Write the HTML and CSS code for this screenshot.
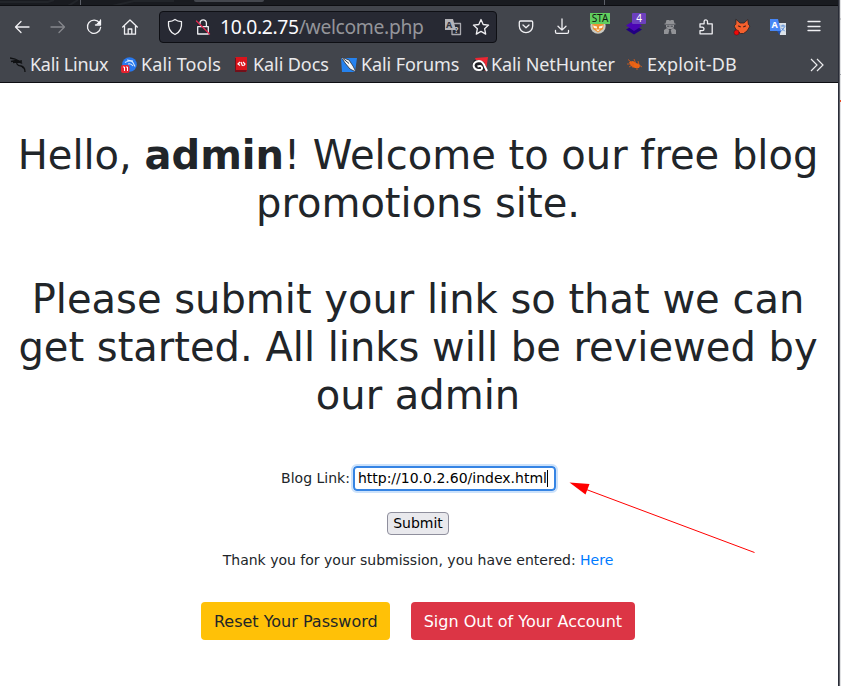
FILE: index.html
```
<!DOCTYPE html>
<html lang="en">
<head>
<meta charset="utf-8">
<title>Welcome</title>
<link rel="stylesheet" href="styles.css">
</head>
<body>
<div class="window">
  <header class="chrome">
    <div class="tabs">
      <svg width="838" height="6" viewBox="0 0 838 6"><path d="M0 2H48L54 0M78 0l-10 6M112 6l22-5h40" stroke="#22252a" stroke-width="2" fill="none"/><path d="M80.500 0v5M604.500 0v5" stroke="#5d6068"/><rect x="194" y="-4" width="70" height="6" rx="2" fill="#44474e"/></svg>
    </div>
    <nav class="toolbar">
      <div class="group">
        <span class="tool"><svg viewBox="0 0 18 18"><path d="M16 9H2.500M8 3.500L2.500 9L8 14.500"/></svg></span>
        <span class="tool dim"><svg viewBox="0 0 18 18"><path d="M2 9h13.500M10 3.500L15.500 9L10 14.500"/></svg></span>
        <span class="tool"><svg viewBox="0 0 18 18"><path d="M14.500 5A6.600 6.600 0 1 0 15.600 9.500M15.500 2v5H10.500"/><path d="M11 6.500h4.500V2z" fill="#fbfbfe" stroke="none"/></svg></span>
        <span class="tool"><svg viewBox="0 0 18 18"><path d="M1.700 9L9 2L16.300 9M3.500 8v8.200h11V8M7.200 16v-5h3.600v5"/></svg></span>
      </div>
      <div class="address">
        <svg class="shield" viewBox="0 0 18 18"><path d="M9 1.500C7 3 4.800 3.500 2.500 3.700C2 9 3.500 14 9 16.500C14.500 14 16 9 15.500 3.700C13.200 3.500 11 3 9 1.500Z"/></svg>
        <svg class="lock" viewBox="0 0 18 18"><path d="M3.700 8.700h10.600v7.300H3.700zM6 5.500V5a3.200 3.200 0 0 1 6.400 0V8.500"/><path d="M2.500 3L15.500 16" stroke="#e22850"/></svg>
        <span class="url">10.0.2.75<span class="path">/welcome.php</span></span>
        <svg class="lang" viewBox="0 0 18 18"><path d="M8 5.500h8.500v11H8z" stroke="#aaaab0"/><path d="M1 1h8l3 11H1z" fill="#b3b3b8" stroke="none"/><text x="2" y="9.500" font-size="9" fill="#30323c">A</text><text x="10.500" y="14.500" font-size="8" fill="#c9c9ce">?</text></svg>
        <svg class="star" viewBox="0 0 18 18"><path d="M9 1.500l2.200 5 5.400.6-4 3.600 1.100 5.400L9 13.400l-4.700 2.700 1.100-5.400-4-3.600 5.400-.6z"/></svg>
      </div>
      <div class="group">
        <span class="tool"><svg viewBox="0 0 18 18"><path d="M3.500 3h11a1.200 1.200 0 0 1 1.200 1.200V8A6.700 6.700 0 0 1 2.300 8V4.200A1.200 1.200 0 0 1 3.500 3zM6 7l3 2.800L12 7"/></svg></span>
        <span class="tool"><svg viewBox="0 0 18 18"><path d="M9 1v11M5 8.200l4 3.900 4-3.900M2.500 12.500v1.500a1.300 1.300 0 0 0 1.300 1.300h10.400a1.300 1.300 0 0 0 1.300-1.300v-1.500"/></svg></span>
        <span class="tool"><svg viewBox="0 0 18 18"><g stroke="none"><circle cx="9" cy="8" r="7.700" fill="#c9c9c2"/><path d="M3 4h12l-1 7-5 3.500L4 11z" fill="#ee9131"/><path d="M4 7.500l4 1v2l-3-.5zM14 7.500l-4 1v2l3-.5z" fill="#fff2dc"/><path d="M7 11.500h4l-2 2z" fill="#fff2dc"/></g></svg><b class="badge sta">STA</b></span>
        <span class="tool"><svg viewBox="0 0 18 18"><g stroke="none"><path d="M1 11.500L9 7l8 4.500-8 5z" fill="#210080"/><path d="M1 7.500L10 2l7 6-8 5z" fill="#4b05b4"/></g></svg><b class="badge four">4</b></span>
        <span class="tool"><svg viewBox="0 0 18 18"><g fill="#929397" stroke="none"><path d="M5.500 2h2.500l1 .8 1-.8h2.500L13.500 5.500h1v1h-11v-1h1z"/><path d="M5 7h8v2l-2 2H7L5 9z"/><path d="M3 12l3-2 2.300 2-1 4H3zM15 12l-3-2-2.300 2 1 4H15z"/></g><path d="M6.500 8.200h1.500M10 8.200h1.500" stroke="#42454c" stroke-width="1"/></svg></span>
        <span class="tool"><svg viewBox="0 0 18 18"><path d="M3 15.800h12.200V5.800H10.500V3.600a1.700 1.700 0 0 0-3.400 0v2.200H3v3.400h2.300a1.700 1.700 0 0 1 0 3.400H3z"/></svg></span>
        <span class="tool"><svg viewBox="0 0 18 18"><path d="M3.200 1.500L7 5h4l3.800-3.500.6 5 1.600 1.500-3 5-3.500 2.500h-3L4 13 1 8l1.600-1.500z" fill="#f5602d" stroke="#292326" stroke-width=".8"/><path d="M5.500 8l1.800.8M12.500 8l-1.800.8" stroke="#442019" stroke-width="1.200"/><circle cx="3.600" cy="14.500" r="2.600" fill="#f00808" stroke="#42141b" stroke-width=".5"/></svg></span>
        <span class="tool"><svg viewBox="0 0 18 18"><g stroke="none"><path d="M8 5h9v12h-6z" fill="#dce2e8"/><path d="M1 1h8l3 12H1z" fill="#4786f5"/><path d="M8 13h4l-1.500 4z" fill="#2252af"/></g><text x="2.500" y="10" font-size="9" fill="#fff">A</text><path d="M12 8h4M14 7v1M12.500 13l3-4M12.500 10l3 3" stroke="#588dd7" stroke-width="1"/></svg></span>
        <span class="tool"><svg viewBox="0 0 18 18"><path d="M3 3.500h12M3 8.500h12M3 12.500h12" stroke-width="1.300"/></svg></span>
      </div>
    </nav>
    <nav class="bookmarks">
      <span class="bookmark linux"><svg viewBox="0 0 16 16"><path d="M0 1l5 1 4 2-4-.3-4 .8M3 5.500l4-.5q4 0 5 1.500M12 4q-6 0-5 3 1 2 4 2 4 1 4 6M12 10l3 2" stroke="#101113" stroke-width="1.300" fill="none"/></svg>Kali Linux</span>
      <span class="bookmark tools"><svg viewBox="0 0 16 16"><circle cx="8.500" cy="7.500" r="7.300" fill="#2878ee"/><path d="M4 5.500q5-3 8 0l2 4M7 7q3-1 5 2M6 3l6 1" stroke="#d7eaff" fill="none" stroke-width="1.100"/><rect y="8" width="8.500" height="8" rx="2" fill="#e52431"/><path d="M2 10h1.500v4M5 10h1.500v4" stroke="#fff" fill="none"/></svg>Kali Tools</span>
      <span class="bookmark docs"><svg viewBox="0 0 16 16"><path d="M3 0h11v13l-1 2H2V1z" fill="#d9141c"/><path d="M2 1v14h1V1zM3 13h11l-1 2H3z" fill="#73101a"/><path d="M7 5L5 7l2 1.500M8 5l1.500 4M10 5l2 2-1.500 2" stroke="#fff" fill="none" stroke-width="1.200"/></svg>Kali Docs</span>
      <span class="bookmark forums"><svg viewBox="0 0 16 16"><path d="M0 1h16l-2 14H1z" fill="#2582ef"/><path d="M0 0l8 3 4 6 3 6-6-3-5-6z" fill="#f5f6f6" stroke="#292d38" stroke-width=".8"/><path d="M2 1.500l6 5" stroke="#303641"/></svg>Kali Forums</span>
      <span class="bookmark hunter"><svg viewBox="0 0 16 16"><path d="M3 1l13-1-2 14-6-2z" fill="#ed2632"/><path d="M2 3L0 8l4 5 6 1 5-1-3-8-6-2z" fill="#202126"/><path d="M1.500 8.500Q2 4.500 7 4q4 0 6 6l2 4M1.500 8.500q1 5 6 4.500 3 0 2.500-2.500Q9 8 5.500 9.500" stroke="#fff" stroke-width="2" fill="none"/></svg>Kali NetHunter</span>
      <span class="bookmark exploit"><svg viewBox="0 0 16 16"><path d="M2 5l4-1 3 2 3 1 1 2-1 2-4 0-4-2z" fill="#ed6514"/><path d="M1 2.500l5 4M0 7h7l-5 3M7 2l2 5M11 4l1 4 3 2M6 8v3M10 9v4" stroke="#e05d16" stroke-width=".8" fill="none"/></svg>Exploit-DB</span>
      <svg class="more" viewBox="0 0 16 16"><path d="M2 2l6 6-6 6M8 2l6 6-6 6" stroke="#ececef" stroke-width="1.200" fill="none"/></svg>
    </nav>
  </header>
  <main>
    <h1>Hello, <b>admin</b>! Welcome to our free blog promotions site.<br><br>Please submit your link so that we can get started. All links will be reviewed by our admin</h1>
    <form>
      <div class="field"><label for="link">Blog Link:</label><span class="entry"><input id="link" type="text" value="http://10.0.2.60/index.html"><i class="caret"></i></span></div>
      <button type="button" class="submit">Submit</button>
    </form>
    <p class="thanks">Thank you for your submission, you have entered: <a>Here</a></p>
    <div class="actions"><a class="btn warning">Reset Your Password</a><a class="btn danger">Sign Out of Your Account</a></div>
    <svg class="arrow" width="188" height="74" viewBox="0 0 188 74"><path d="M16 7L185.500 70.500" stroke="#f00" fill="none"/><path d="M.5 .5L20.500 2L16.500 12.500Z" fill="#f00"/></svg>
  </main>
</div>
<aside class="edge"><svg width="3" height="686"><path d="M1 0h1v686H1z" fill="#62646b"/><path d="M2 0h1v686H2z" fill="#e1e2e4"/><path d="M2 19h1M2 74.500h1" stroke="#a0a2a7"/><path d="M2 101h1" stroke="#e94a25" stroke-width="2"/></svg></aside>
</body>
</html>
```

FILE: styles.css
```
* { box-sizing: border-box; }
body { margin: 0; width: 841px; height: 686px; overflow: hidden; display: flex; background: #fff; color: #212529; font: 14px/21px "DejaVu Sans", sans-serif; }
svg { display: block; flex: none; }
.window { width: 838px; height: 686px; }
.edge { width: 3px; background: #292c37; }
.chrome { height: 83px; background: #42454c; border-bottom: 1px solid #0d0e12; font-family: "Noto Sans", sans-serif; color: #e9e9eb; }
.tabs { height: 6px; background: #191b20; border-bottom: 1px solid #0d0e12; overflow: hidden; }
.toolbar { height: 41px; display: flex; align-items: center; padding-left: 4px; }
.group { display: flex; }
.tool { width: 36px; height: 36px; display: flex; align-items: center; justify-content: center; position: relative; }
.toolbar svg { width: 18px; height: 18px; fill: none; stroke: #f0f0f3; stroke-width: 1.3; stroke-linecap: round; stroke-linejoin: round; }
.toolbar svg text { stroke: none; font-family: "Noto Sans", sans-serif; font-weight: 700; }
.toolbar .dim svg { stroke: #85878c; }
.badge { position: absolute; font-size: 10px; line-height: 11px; text-align: center; font-weight: 400; }
.sta { left: 10px; top: 4px; width: 20px; height: 11px; background: #62cf5f; color: #101b12; }
.four { left: 16px; top: 4px; width: 14px; height: 11px; border-radius: 1px; background: #6c40bd; color: #fff; }
.address { width: 338px; height: 32px; margin: 0 11px; padding: 0 6px; display: flex; align-items: center; background: #272933; border: 1px solid #0e0f14; border-radius: 4px; }
.shield { margin-right: 10px; }
.lock { margin-right: 8px; }
.url { width: 224px; font-size: 19.3px; letter-spacing: -.33px; line-height: 28px; color: #fbfbfe; white-space: nowrap; }
.url .path { color: #94959a; }
.lang { margin-right: 10px; }
.bookmarks { height: 35px; padding-left: 10px; display: grid; grid-template-columns: 111px 112px 108px 131px 155px 182px 16px; align-items: center; }
.bookmark { display: flex; align-items: center; font-size: 18px; line-height: 25px; white-space: nowrap; }
.bookmark svg { width: 16px; height: 16px; margin-right: 4px; }
.linux { letter-spacing: -.27px; }
.tools { letter-spacing: .1px; }
.docs { letter-spacing: -.08px; }
.forums { letter-spacing: -.1px; }
.hunter { letter-spacing: -.1px; }
.hunter svg { margin-right: 3px; }
.exploit { letter-spacing: .2px; }
.more { width: 16px; height: 16px; }
main { position: relative; height: 603px; padding: 48px 2px 0 0; text-align: center; }
h1 { margin: 0 0 47px; font-size: 40px; line-height: 48px; font-weight: 400; }
.field { height: 25px; display: flex; justify-content: center; align-items: center; gap: 3px; padding-left: 1px; }
.entry { position: relative; display: block; width: 203px; height: 25px; }
input { display: block; width: 203px; height: 25px; margin: 0; padding: 0 4px 2px 3px; border: 2px solid #3584e4; border-radius: 4px; outline: 2px solid #cce2fb; background: #fff; color: #000; font: 14px/19px "DejaVu Sans", sans-serif; }
.caret { position: absolute; left: 194px; top: 4px; width: 1px; height: 17px; background: #000; }
.submit { display: block; width: 62px; height: 23px; margin: 21px auto 0; padding: 0 0 1px; border: 1px solid #8f8f9d; border-radius: 4px; background: #e9e9ed; color: #000; font: 14px/20px "DejaVu Sans", sans-serif; }
.thanks { margin: 15px 0 31px; }
.thanks a { color: #007bff; }
.actions { display: flex; justify-content: center; gap: 21px; }
.btn { height: 38px; padding: 8px 12.5px 6px; border-radius: 4px; font-size: 16px; line-height: 24px; white-space: nowrap; }
.warning { background: #ffc107; color: #212529; }
.danger { background: #dc3545; color: #fff; }
.arrow { position: absolute; left: 569px; top: 399px; }
```
